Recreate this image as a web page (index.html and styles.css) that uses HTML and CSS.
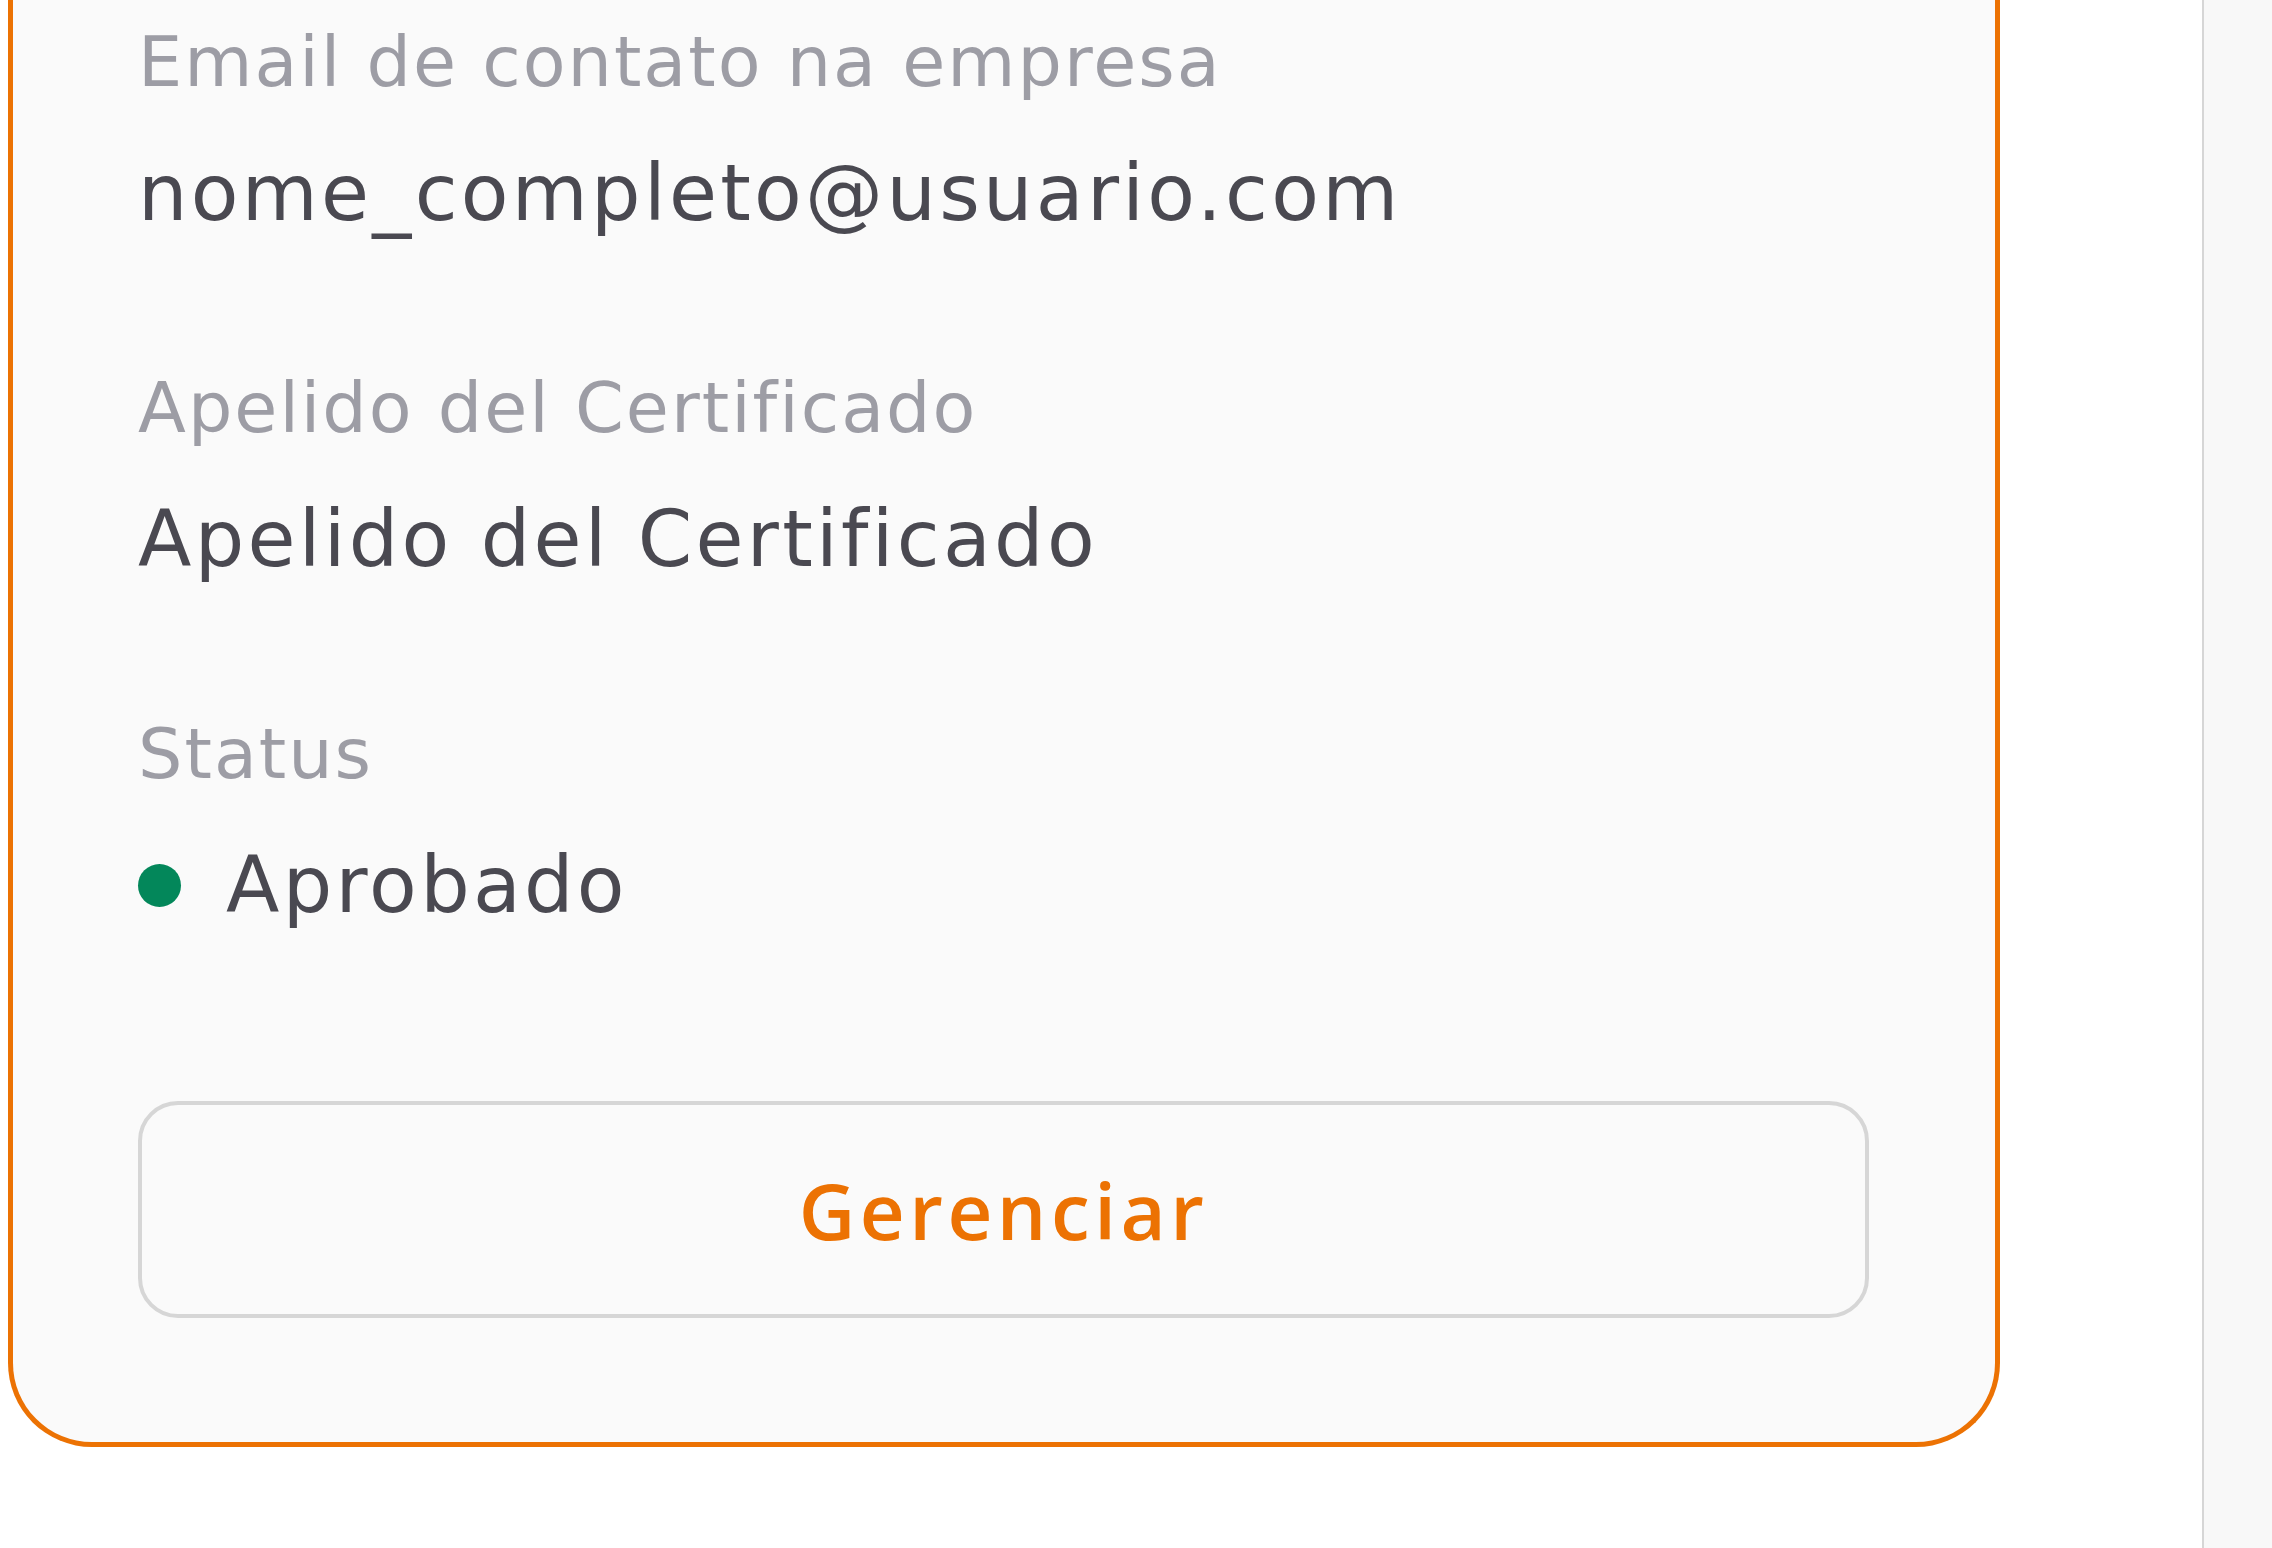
FILE: index.html
```html
<!DOCTYPE html>
<html lang="pt">
<head>
    <meta charset="UTF-8">
    <meta name="viewport" content="width=device-width, initial-scale=1.0">
    <title>Certificado</title>

    <link rel="stylesheet" href="styles.css">
</head>
<body>
    <div class="layout">
        <main class="content">
            <section class="cert-card">
                <div class="field">
                    <span class="field-label">Email de contato na empresa</span>
                    <span class="field-value">nome_completo@usuario.com</span>
                </div>
                <div class="field">
                    <span class="field-label">Apelido del Certificado</span>
                    <span class="field-value">Apelido del Certificado</span>
                </div>
                <div class="field">
                    <span class="field-label">Status</span>
                    <span class="field-value status">
                        <span class="status-dot"></span>
                        Aprobado
                    </span>
                </div>

                <button class="manage-btn" type="button">Gerenciar</button>
            </section>
        </main>
        <aside class="side-panel"></aside>
    </div>
</body>
</html>
```

FILE: styles.css
```css
/* page */
body {
    margin: 0;
    background-color: #ffffff;
    font-family: "DejaVu Sans", "Noto Sans", sans-serif;
}

.layout {
    display: flex;
    min-height: 100vh;
}

.content {
    flex: 1;
}

.side-panel {
    width: 68px;
    border-left: 2px solid #d6d6d6;
    background-color: #f8f8f8;
}

/* certificate card */
.cert-card {
    box-sizing: border-box;
    width: 1992px;
    margin-left: 8px;
    padding: 20px 126px 124px 125px;
    display: flex;
    flex-direction: column;
    gap: 126px;
    background-color: #fafafa;
    border: 5px solid #ec7203;
    border-top: 0;
    border-radius: 0 0 84px 84px;
}

.field {
    display: flex;
    flex-direction: column;
    gap: 42px;
}

.field-label {
    font-size: 70px;
    line-height: 84px;
    letter-spacing: 2px;
    color: #9d9da5;
}

.field-value {
    font-size: 78px;
    line-height: 94px;
    letter-spacing: 3.3px;
    color: #4a4951;
}

.status {
    display: flex;
    align-items: center;
    gap: 45px;
}

.status-dot {
    width: 43px;
    height: 43px;
    border-radius: 50%;
    background-color: #03875a;
}

.manage-btn {
    margin-top: 43px;
    height: 217px;
    border: 4px solid #d6d6d6;
    border-radius: 40px;
    background: transparent;
    font-family: "Open Sans", "DejaVu Sans", sans-serif;
    font-size: 78px;
    font-weight: 600;
    letter-spacing: 4.5px;
    color: #ec7203;
    cursor: pointer;
}
```
